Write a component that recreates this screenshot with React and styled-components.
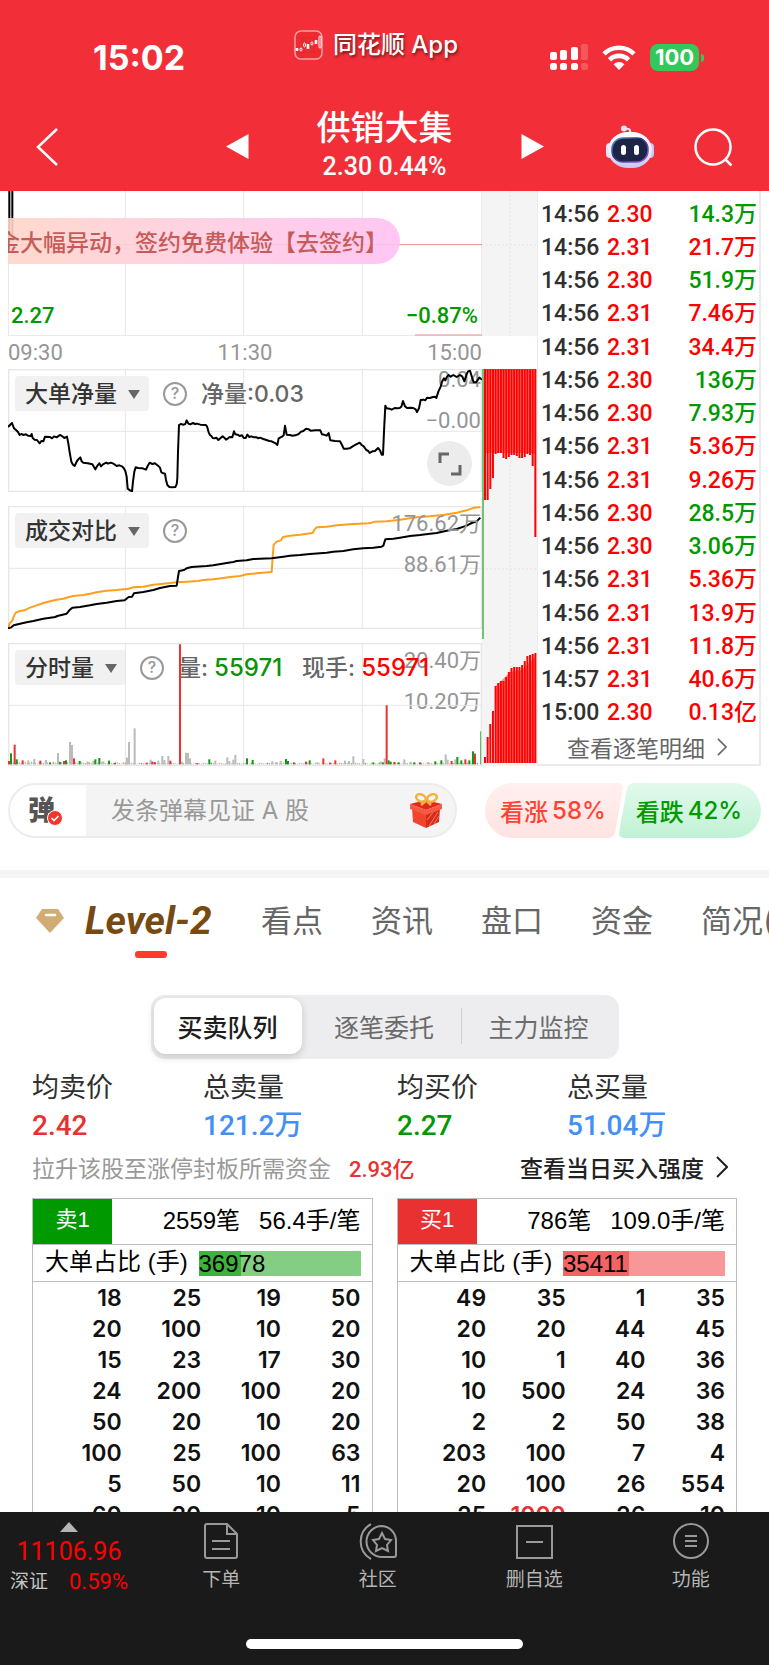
import React, { useState } from 'react';
import styled, { createGlobalStyle } from 'styled-components';

const GlobalStyle = createGlobalStyle`
  *, *::before, *::after {
    box-sizing: border-box;
  }
  body {
    margin: 0;
    background: #fff;
    color: #303030;
    font-family: "Inter", "Noto Sans CJK SC", sans-serif;
  }
  button, input, select {
    font: inherit;
    color: inherit;
    background: none;
    border: 0;
    padding: 0;
    margin: 0;
  }
  button, select {
    cursor: pointer;
  }
  a {
    color: inherit;
    text-decoration: none;
  }
  svg {
    display: block;
  }
`

const numberFont = '"Roboto", "Noto Sans CJK SC", sans-serif';
const tableFont = '"Liberation Sans", "Noto Sans CJK SC", sans-serif';

const colors = {
  red: '#ff0000',
  green: '#009900',
  softRed: '#ea3131',
  blue: '#448ff5',
};

const Screen = styled.div`
  display: flex;
  flex-direction: column;
  height: 100vh;
  overflow: hidden;
`

/* ---------- header ---------- */

const Header = styled.header`
  flex: none;
  height: 191px;
  background: #f22f38;
  color: #fff;
`

const StatusBar = styled.div`
  display: grid;
  grid-template-columns: 1fr auto 1fr;
  align-items: center;
  height: 100px;
  padding: 15px 65px 0 48px;
`

const Clock = styled.time`
  padding-left: 45px;
  font-size: 34px;
  font-weight: 700;
  line-height: 40px;
`

const AppTag = styled.div`
  display: flex;
  align-items: center;
  gap: 10px;
  margin-bottom: 26px;
  font-size: 24px;
  font-weight: 500;
  line-height: 30px;
  text-shadow: 1px 2px 3px rgba(0, 0, 0, 0.55);
`

const StatusIcons = styled.div`
  display: flex;
  justify-content: flex-end;
  align-items: center;
  gap: 14px;
`

const Battery = styled.div`
  display: flex;
  align-items: center;
  gap: 2px;
  &::after {
    content: '';
    width: 3px;
    height: 8px;
    border-radius: 0 3px 3px 0;
    background: #34c759;
  }
`

const BatteryLevel = styled.span`
  width: 49px;
  height: 27px;
  border-radius: 8px;
  background: #34c759;
  font-size: 22px;
  font-weight: 700;
  line-height: 27px;
  text-align: center;
`

const NavRow = styled.div`
  display: grid;
  grid-template-columns: 1fr auto 1fr;
  align-items: center;
  height: 91px;
  padding: 2px 35px 0;
`

const NavSide = styled.div`
  display: flex;
  align-items: center;
  justify-content: space-between;
`

const NavGroup = styled.div`
  display: flex;
  align-items: center;
  gap: 40px;
`

const TitleBlock = styled.div`
  width: 272px;
  text-align: center;
`

const StockName = styled.h1`
  margin: 0;
  font-size: 34px;
  font-weight: 500;
  line-height: 40px;
`

const StockPrice = styled.p`
  margin: 0;
  font-family: ${numberFont};
  font-size: 25px;
  font-weight: 500;
  line-height: 38px;
`

const IconButton = styled.button`
  display: flex;
  align-items: center;
  justify-content: center;
`

/* ---------- chart area ---------- */

const Main = styled.main`
  flex: 1;
  min-height: 0;
  overflow: hidden;
`

const Market = styled.section`
  display: grid;
  grid-template-columns: minmax(0, 1fr) 55px 224px;
  padding: 0 8px;
`

const Charts = styled.div`
  display: flex;
  flex-direction: column;
  gap: 14px;
`

const Panel = styled.div`
  display: grid;
  height: ${props => props.$height || 123}px;
  > * {
    grid-area: 1 / 1;
    min-width: 0;
  }
`

const Plot = styled.svg`
  width: 100%;
  height: 100%;
  * {
    vector-effect: non-scaling-stroke;
  }
`

const PriceOverlay = styled.div`
  display: flex;
  flex-direction: column;
  justify-content: space-between;
  padding: 27px 0 6px;
`

const Notice = styled.a`
  display: flex;
  justify-content: flex-end;
  align-items: center;
  width: 392px;
  height: 46px;
  padding-right: 12px;
  overflow: hidden;
  border-radius: 0 23px 23px 0;
  background: linear-gradient(90deg, rgba(255, 213, 200, 0.9), rgba(255, 205, 225, 0.9) 50%, rgba(255, 192, 242, 0.9));
  color: #c75b58;
  font-size: 23px;
  font-weight: 500;
  white-space: nowrap;
`

const PriceRange = styled.div`
  display: flex;
  justify-content: space-between;
  padding: 0 4px 0 3px;
  color: ${colors.green};
  font-family: ${numberFont};
  font-size: 22px;
  font-weight: 500;
  line-height: 29px;
`

const TimeAxis = styled.div`
  display: grid;
  grid-template-columns: 1fr auto 1fr;
  height: 33px;
  color: #959595;
  font-family: ${numberFont};
  font-size: 22px;
  line-height: 34px;
  > :last-child {
    text-align: right;
  }
`

const Toolbar = styled.div`
  display: flex;
  align-items: center;
  align-self: start;
  gap: 14px;
  padding: 7px 0 0 7px;
  color: #666;
  font-size: 23px;
  font-weight: 500;
  line-height: 34px;
  white-space: pre;
`

const SelectBox = styled.label`
  display: flex;
  align-items: center;
  height: 35px;
  border-radius: 4px;
  background: rgba(239, 239, 239, 0.9);
  color: #333;
  &::after {
    content: '';
    width: 12px;
    margin: 2px 9px 0 -20px;
    border: 6px solid transparent;
    border-top: 9px solid #666;
    border-bottom: 0;
    pointer-events: none;
  }
`

const IndicatorSelect = styled.select`
  appearance: none;
  padding: 0 31px 0 10px;
  outline: none;
`

const HelpButton = styled.button`
  width: 24px;
  height: 24px;
  border: 2px solid #999;
  border-radius: 50%;
  color: #999;
  font-size: 16px;
  line-height: 19px;
`

const Readings = styled.div`
  display: flex;
  gap: 20px;
`

const Value = styled.b`
  color: ${props => props.$color};
  font-size: 24px;
  font-weight: 500;
`

const Scale = styled.div`
  align-self: start;
  justify-self: end;
  margin-top: ${props => (props.$raised ? -10 : -3)}px;
  padding-right: 1px;
  color: #959595;
  font-family: ${numberFont};
  font-size: 22px;
  line-height: 41px;
  text-align: right;
`

const ScaleLine = styled.div`
  height: 41px;
`

const ExpandButton = styled.button`
  display: flex;
  align-items: center;
  justify-content: center;
  align-self: end;
  justify-self: end;
  width: 45px;
  height: 45px;
  margin: 0 10px 6px 0;
  border-radius: 50%;
  background: #ececec;
`

const DepthColumn = styled.svg`
  width: 55px;
  height: 575px;
`

/* ---------- trades ---------- */

const TradePanel = styled.div`
  display: flex;
  flex-direction: column;
  padding: 7px 2px 0 3px;
  border: solid #ebebeb;
  border-width: 0 2px 2px 1px;
  font-family: ${numberFont};
`

const TradeTable = styled.table`
  width: 100%;
  height: 532px;
  border-collapse: collapse;
  color: #303030;
  font-size: 23px;
  font-weight: 500;
  line-height: 30px;
  td {
    padding: 0;
  }
  td:first-child {
    width: 66px;
  }
`

const PriceCell = styled.td`
  color: ${colors.red};
`

const VolumeCell = styled.td`
  color: ${props => (props.$up ? colors.red : colors.green)};
  text-align: right;
`

const MoreLink = styled.a`
  display: flex;
  flex: 1;
  align-items: center;
  justify-content: center;
  gap: 12px;
  padding-right: 4px;
  color: #666;
  font-size: 23px;
`

/* ---------- danmu and vote ---------- */

const ActionRow = styled.div`
  display: flex;
  align-items: center;
  gap: 28px;
  height: 55px;
  margin: 17px 8px 32px;
`

const DanmuBar = styled.div`
  display: flex;
  flex: 1;
  align-items: center;
  height: 55px;
  padding-right: 12px;
  overflow: hidden;
  border: 2px solid #ececec;
  border-radius: 28px;
  background: #f4f4f4;
`

const DanmuToggle = styled.button`
  display: flex;
  align-items: center;
  align-self: stretch;
  width: 76px;
  padding-left: 18px;
  background: #fff;
  color: #555;
  font-size: 27px;
  font-weight: 900;
  line-height: 36px;
  svg {
    align-self: flex-end;
    flex: none;
    margin: 0 0 10px -8px;
  }
`

const DanmuInput = styled.input`
  flex: 1;
  min-width: 0;
  padding-left: 25px;
  outline: none;
  font-size: 24px;
  &::placeholder {
    color: #999;
    opacity: 1;
  }
`

const Vote = styled.div`
  display: flex;
  width: 276px;
  height: 55px;
  overflow: hidden;
  border-radius: 28px;
`

const VoteButton = styled.button`
  position: relative;
  display: flex;
  flex: 1;
  align-items: center;
  justify-content: center;
  gap: 4px;
  padding-right: ${props => (props.$up ? 0 : 4)}px;
  z-index: 0;
  color: ${props => (props.$up ? '#ff4236' : colors.green)};
  font-size: 24px;
  font-weight: 500;
  &::before {
    content: '';
    position: absolute;
    z-index: -1;
    inset: ${props => (props.$up ? '0 2px 0 -20px' : '0 -20px 0 2px')};
    border-radius: 6px;
    background: ${props => (props.$up
      ? 'linear-gradient(#fff0ef, #ffe3e1)'
      : 'linear-gradient(#e2f9ec, #c0f2d4)')};
    transform: skewX(-10deg);
  }
`

/* ---------- level-2 ---------- */

const Tabs = styled.nav`
  display: flex;
  gap: 48px;
  height: 125px;
  padding: 19px 0 0 36px;
  overflow: hidden;
  border-top: 8px solid #f4f4f4;
`

const Tab = styled.a`
  flex: none;
  color: #666;
  font-size: 31px;
  line-height: 48px;
`

const LevelTab = styled.a`
  display: grid;
  grid-template-columns: 49px 128px;
  grid-template-rows: 48px 7px;
  flex: none;
  align-items: center;
  row-gap: 6px;
  color: #774a12;
  font-family: ${numberFont};
  font-size: 39px;
  font-style: italic;
  font-weight: 700;
  line-height: 48px;
  white-space: nowrap;
  &::after {
    content: '';
    grid-column: 1 / -1;
    justify-self: center;
    width: 32px;
    height: 7px;
    margin-left: 52px;
    border-radius: 3px;
    background: #ff3a31;
  }
`

const Segments = styled.div`
  display: grid;
  grid-template-columns: repeat(3, 1fr);
  width: 468px;
  height: 64px;
  margin: 0 auto;
  padding: 3px;
  border-radius: 14px;
  background: #ededef;
`

const Segment = styled.button`
  margin: ${props => (props.$active ? '0 6px 2px 0' : '10px 0 12px')};
  border-right: ${props => (props.$divided ? '1px solid #cfcfd2' : '0')};
  border-radius: ${props => (props.$active ? '12px' : '0')};
  background: ${props => (props.$active ? '#fff' : 'none')};
  box-shadow: ${props => (props.$active ? '0 3px 8px rgba(0, 0, 0, 0.16)' : 'none')};
  color: ${props => (props.$active ? '#1d1d1d' : '#6b6b6b')};
  font-size: 25px;
  font-weight: ${props => (props.$active ? 500 : 400)};
`

const Detail = styled.section`
  padding: 10px 32px 0;
`

const Summary = styled.dl`
  display: grid;
  grid-template-columns: 171fr 194fr 170fr 170fr;
  margin: 0;
`

const SummaryItem = styled.div`
  dt {
    font-size: 27px;
    line-height: 38px;
  }
  dd {
    margin: 0;
    color: ${props => props.$color};
    font-family: ${numberFont};
    font-size: 28px;
    font-weight: 500;
    line-height: 37px;
  }
`

const HintRow = styled.div`
  display: flex;
  align-items: center;
  justify-content: space-between;
  height: 54px;
  padding: 0 9px 8px 0;
  font-size: 23px;
`

const Hint = styled.p`
  margin: 0;
  color: #999;
  b {
    margin-left: 18px;
    color: ${colors.softRed};
    font-family: ${numberFont};
    font-size: 22px;
    font-weight: 500;
  }
`

const StrengthLink = styled.a`
  display: flex;
  align-items: center;
  gap: 12px;
  color: #222;
  font-weight: 500;
`

const Queues = styled.div`
  display: grid;
  grid-template-columns: 1fr 1fr;
  gap: 24px;
`

const Queue = styled.div`
  border: 1px solid #bdbdbd;
  color: #000;
  font-family: ${tableFont};
  font-size: 24px;
`

const QueueHead = styled.div`
  display: flex;
  align-items: center;
  justify-content: flex-end;
  gap: 19px;
  height: 46px;
  padding-right: 11px;
  border-bottom: 1px solid #bdbdbd;
`

const QueueText = styled.span`
  padding-bottom: 7px;
`

const QueueName = styled.strong`
  align-self: stretch;
  width: 79px;
  margin-right: auto;
  background: ${props => props.$color};
  color: #fff;
  font-size: 22px;
  font-weight: 400;
  line-height: 42px;
  text-align: center;
`

const RatioRow = styled.div`
  display: flex;
  align-items: center;
  justify-content: space-between;
  height: 37px;
  padding: 0 11px 0 12px;
  border-bottom: 1px solid #bdbdbd;
`

const RatioBar = styled.div`
  width: 162px;
  height: 25px;
  background: linear-gradient(90deg, ${props => props.$dark} ${props => props.$share}%, ${props => props.$light} 0);
  line-height: 25px;
`

const OrderTable = styled.table`
  width: 100%;
  padding: 1px 11px 0 9px;
  border-spacing: 0;
  table-layout: fixed;
  font-family: "Inter", sans-serif;
  font-size: 23px;
  font-weight: 600;
  line-height: 31px;
  text-align: right;
  td {
    padding: 0;
  }
`

const OrderCell = styled.td`
  color: ${props => (props.$large ? colors.softRed : '#111')};
`

/* ---------- bottom bar ---------- */

const BottomBar = styled.footer`
  flex: none;
  height: 153px;
  background: #1a1a1a;
  color: #b5b5b5;
`

const BottomItems = styled.nav`
  display: grid;
  grid-template-columns: 143px repeat(4, 1fr);
  height: 127px;
`

const IndexQuote = styled.button`
  display: flex;
  flex-direction: column;
  align-items: center;
  padding: 10px 5px 0 0;
  color: ${colors.red};
  font-family: ${numberFont};
  font-size: 25px;
  line-height: 30px;
  &::before {
    content: '';
    margin-bottom: 5px;
    border: 9px solid transparent;
    border-top: 0;
    border-bottom: 10px solid #b5b5b5;
  }
`

const IndexChange = styled.span`
  display: flex;
  gap: 21px;
  font-size: 22px;
  small {
    color: #c5c5c5;
    font-size: 19px;
  }
`

const BottomItem = styled.button`
  display: flex;
  flex-direction: column;
  align-items: center;
  gap: 6px;
  padding-top: 10px;
  font-size: 19px;
  line-height: 28px;
`

const HomeIndicator = styled.div`
  width: 36%;
  height: 10px;
  margin: 0 auto;
  border-radius: 5px;
  background: #fff;
`

/* ---------- data ---------- */

const trades = [
  ['14:56', '2.30', '14.3万', false],
  ['14:56', '2.31', '21.7万', true],
  ['14:56', '2.30', '51.9万', false],
  ['14:56', '2.31', '7.46万', true],
  ['14:56', '2.31', '34.4万', true],
  ['14:56', '2.30', '136万', false],
  ['14:56', '2.30', '7.93万', false],
  ['14:56', '2.31', '5.36万', true],
  ['14:56', '2.31', '9.26万', true],
  ['14:56', '2.30', '28.5万', false],
  ['14:56', '2.30', '3.06万', false],
  ['14:56', '2.31', '5.36万', true],
  ['14:56', '2.31', '13.9万', true],
  ['14:56', '2.31', '11.8万', true],
  ['14:57', '2.31', '40.6万', true],
  ['15:00', '2.30', '0.13亿', true],
];

const summary = [
  ['均卖价', '2.42', colors.softRed],
  ['总卖量', '121.2万', colors.blue],
  ['均买价', '2.27', colors.green],
  ['总买量', '51.04万', colors.blue],
];

const queues = [
  {
    name: '卖1', count: '2559笔', average: '56.4手/笔', total: '36978', share: 26,
    color: '#009900', dark: '#3db33d', light: '#83ce83',
    rows: [
      [18, 25, 19, 50], [20, 100, 10, 20], [15, 23, 17, 30], [24, 200, 100, 20],
      [50, 20, 10, 20], [100, 25, 100, 63], [5, 50, 10, 11], [60, 20, 10, 5],
    ],
  },
  {
    name: '买1', count: '786笔', average: '109.0手/笔', total: '35411', share: 41,
    color: '#ea3131', dark: '#f26464', light: '#f79797',
    rows: [
      [49, 35, 1, 35], [20, 20, 44, 45], [10, 1, 40, 36], [10, 500, 24, 36],
      [2, 2, 50, 38], [203, 100, 7, 4], [20, 100, 26, 554], [25, 1000, 26, 10],
    ],
  },
];

const netLine = '24,186 36,174 42,190 48,195 54,201 59,210 64,207 71,210 78,208 84,212 92,213 95,207 98,219 104,224 111,225 119,235 124,228 130,229 135,215 150,216 156,220 162,214 170,217 177,212 181,210 187,214 193,219 201,215 205,235 209,262 214,290 219,299 224,303 231,288 237,281 241,277 245,289 250,293 263,295 277,298 286,313 293,301 298,295 303,304 309,298 313,296 319,293 324,296 332,293 340,296 350,303 358,301 366,304 371,309 376,318 380,335 383,371 390,376 396,379 399,350 403,320 407,307 414,309 428,310 438,314 443,303 449,293 457,297 465,295 474,302 480,308 484,322 490,325 495,326 498,345 502,360 508,366 516,367 526,366 530,358 532,340 534,260 537,180 542,177 551,179 556,177 560,166 565,176 571,178 579,174 585,177 591,176 601,179 617,180 621,184 626,202 630,210 634,213 638,219 644,220 649,218 655,225 661,220 668,214 673,218 678,224 684,220 689,216 697,217 702,199 706,208 713,209 719,213 726,211 731,219 737,219 742,209 748,216 754,214 762,217 770,217 775,220 780,218 790,222 799,225 808,228 815,229 821,232 827,235 832,240 836,220 846,215 851,211 855,182 860,209 870,210 877,212 886,211 896,207 903,200 910,198 918,191 926,193 932,197 946,196 961,196 966,208 972,209 980,212 986,204 991,226 1005,228 1020,229 1026,240 1031,251 1040,251 1049,250 1058,244 1067,239 1079,233 1085,240 1091,244 1099,255 1105,258 1109,264 1117,259 1125,258 1134,249 1140,256 1145,269 1149,269 1152,200 1156,122 1160,130 1168,131 1175,134 1184,129 1191,130 1199,129 1204,125 1209,108 1215,124 1221,129 1231,128 1240,129 1247,133 1251,141 1257,130 1262,105 1270,104 1276,106 1281,98 1290,99 1299,96 1305,95 1309,99 1315,80 1322,65 1326,50 1332,40 1336,46 1341,35 1346,30 1352,35 1360,30 1370,36 1380,30 1387,35 1393,49 1399,30 1404,19 1410,17 1416,37 1421,52 1428,52 1438,38 1446,44';
const buyLine = '24,384 29,369 37,361 41,349 47,337 60,332 73,330 90,322 110,315 130,308 150,303 170,298 190,295 207,290 220,287 250,284 270,280 290,276 320,271 350,269 386,265 400,261 430,259 460,253 490,250 530,246 560,244 595,242 610,239 640,237 670,233 690,230 720,227 740,222 770,219 815,215 818,170 821,133 830,124 843,120 849,110 870,106 900,103 938,98 944,87 950,81 980,79 1010,75 1050,72 1106,69 1115,67 1125,64 1160,63 1200,58 1250,51 1290,48 1330,44 1370,37 1400,30 1422,22 1441,21';
const sellLine = '24,384 34,381 41,375 60,370 80,366 100,362 130,355 166,350 172,347 200,340 208,330 217,322 240,320 270,315 290,311 320,307 350,302 374,300 386,290 396,289 402,279 430,275 460,269 480,263 510,257 530,256 534,230 537,212 552,209 560,204 575,200 620,197 640,195 680,188 700,185 710,182 740,180 760,176 815,174 850,169 870,166 900,164 930,161 980,157 1000,154 1030,152 1060,147 1090,144 1120,142 1145,139 1150,136 1156,117 1180,115 1200,112 1230,107 1260,104 1290,100 1310,98 1340,91 1370,86 1400,76 1415,68 1430,63 1441,52';

// [x, height, color], in plot units above the baseline
const volumeBars = [
  [27, 10, 'r'], [33, 33, 'g'], [44, 59, 'r'], [50, 15, 'g'], [68, 12, 'r'], [85, 12], [103, 16], [121, 11, 'r'],
  [138, 13], [150, 6, 'g'], [174, 34], [180, 7, 'g'], [192, 10, 'r'], [198, 12, 'g'], [210, 67], [216, 58],
  [222, 18, 'r'], [239, 10, 'g'], [263, 8], [280, 11], [286, 15, 'g'], [298, 19, 'g'], [310, 9], [327, 11, 'g'],
  [345, 4, 'r'], [381, 20], [387, 67], [404, 108], [440, 5, 'r'], [452, 14], [457, 8, 'r'], [464, 7, 'r'], [475, 11],
  [487, 25], [493, 13], [505, 25], [511, 11, 'r'], [546, 8], [558, 35], [564, 34], [570, 18], [592, 4, 'r'],
  [628, 15, 'g'], [646, 11], [682, 21], [688, 10], [700, 14], [706, 28], [741, 18, 'g'], [758, 13, 'g'],
  [817, 9], [830, 7], [842, 10], [858, 16, 'g'], [864, 10, 'g'], [882, 6, 'r'], [918, 8, 'r'], [929, 12, 'g'],
  [953, 6], [970, 18, 'r'], [990, 5, 'r'], [1006, 12, 'r'], [1035, 11], [1047, 10], [1060, 24], [1090, 16],
  [1120, 6, 'g'], [1143, 8], [1149, 6, 'g'], [1154, 18], [1166, 12, 'g'], [1172, 8, 'g'], [1183, 7, 'r'], [1196, 6, 'g'],
  [1213, 15], [1231, 7], [1243, 6, 'g'], [1260, 6, 'r'], [1284, 7], [1306, 9, 'g'], [1324, 12, 'g'], [1337, 30],
  [1343, 14], [1355, 10, 'r'], [1366, 15], [1372, 22, 'g'], [1384, 12, 'g'], [1396, 15, 'r'], [1408, 12, 'g'],
  [1419, 39, 'g'], [1425, 32, 'r'],
];
const barColors = { r: '#f03030', g: '#119911' };

const askDepth = [131, 131, 120, 109, 85, 84, 84, 89, 90, 88, 86, 86, 87, 89, 89, 88, 85, 86, 97, 168];
const bidDepth = [6, 26, 39, 52, 77, 80, 82, 82, 86, 91, 95, 96, 96, 96, 98, 102, 107, 108, 109, 110];

/* ---------- icons ---------- */

const Chevron = ({ width, height, stroke = 2 }) => (
  <svg width={width} height={height} viewBox="0 0 12 22" fill="none" stroke="currentColor" strokeWidth={stroke}>
    <path d="M1 1l10 10L1 21" />
  </svg>
);

const AppIcon = () => (
  <svg width="29" height="30" viewBox="0 0 29 30" fill="none" stroke="#fff">
    <rect x="1" y="1" width="27" height="28" rx="6" fill="#ee2b30" stroke="#f7a3a5" strokeWidth="1.5" />
    <path d="M2 8h25M2 22h25M8 2v26M20 2v26" stroke="#e02329" strokeWidth=".6" />
    <path d="M3 18v3M14 14v5M22 10v4" strokeWidth="2.6" />
    <ellipse cx="7" cy="19.500" rx="1" ry="1.600" />
    <ellipse cx="10.500" cy="15" rx="1" ry="2" />
    <ellipse cx="18" cy="13.500" rx="1" ry="1.600" />
    <rect x="25" y="6" width="2" height="12" rx="1" />
  </svg>
);

const SignalIcon = () => (
  <svg width="38" height="27" viewBox="0 0 38 27" fill="#fff">
    <rect x="0" y="8" width="7" height="8" rx="2" />
    <rect x="10" y="6" width="7" height="10" rx="2" />
    <rect x="21" y="3" width="7" height="13" rx="2" />
    <rect x="31" y="0" width="7" height="16" rx="2" opacity=".2" />
    <rect x="0" y="19" width="7" height="7" rx="2.500" />
    <rect x="10" y="19" width="7" height="7" rx="2.500" />
    <rect x="21" y="19" width="7" height="7" rx="2.500" />
    <rect x="31" y="19" width="7" height="7" rx="2.500" opacity=".2" />
  </svg>
);

const WifiIcon = () => (
  <svg width="34" height="25" viewBox="0 0 34 25" fill="none" stroke="#fff" strokeWidth="4.600">
    <path d="M2 8.800a21.500 21.500 0 0 1 30 0" />
    <path d="M7.500 14.800a13.500 13.500 0 0 1 19 0" />
    <path d="M17 25l-5.500-5.700a8 8 0 0 1 11 0z" fill="#fff" stroke="none" />
  </svg>
);

const Triangle = ({ left }) => (
  <svg width="23" height="25" viewBox="0 0 23 25" fill="#fff">
    <path d={left ? 'M22.500 0v25L0 12.500z' : 'M.5 0v25L23 12.500z'} />
  </svg>
);

const RobotIcon = () => (
  <svg width="48" height="44" viewBox="0 0 48 44">
    <defs>
      <linearGradient id="shell" x1="0" y1="0" x2="0" y2="1">
        <stop offset="0" stopColor="#fff" />
        <stop offset="0.6" stopColor="#e9e9fb" />
        <stop offset="1" stopColor="#c3c5f2" />
      </linearGradient>
      <linearGradient id="visor" x1="0" y1="0" x2="1" y2="1">
        <stop offset="0" stopColor="#5ba4ee" />
        <stop offset="0.4" stopColor="#3a2f78" />
        <stop offset="1" stopColor="#a15bf0" />
      </linearGradient>
    </defs>
    <path d="M24 8c1-4-2-5-6-4" fill="none" stroke="#ececfd" strokeWidth="2" />
    <circle cx="18" cy="3.500" r="3" fill="#e4e4fb" />
    <rect x="0" y="18" width="8" height="15" rx="4" fill="#e2e2fa" />
    <rect x="40" y="18" width="8" height="15" rx="4" fill="#c5c8f4" />
    <rect x="2" y="7" width="44" height="36" rx="20" ry="18" fill="url(#shell)" />
    <rect x="6" y="13" width="36" height="24" rx="11" fill="#1d2547" stroke="url(#visor)" strokeWidth="1.500" />
    <rect x="15" y="20" width="5" height="10" rx="2.500" fill="#fff" />
    <rect x="28" y="20" width="5" height="10" rx="2.500" fill="#fff" />
  </svg>
);

const SearchIcon = () => (
  <svg width="40" height="40" viewBox="0 0 40 40" fill="none" stroke="#fff" strokeWidth="2.500">
    <circle cx="19" cy="20" r="17.500" />
    <path d="M31 32l6.500 6.500" />
  </svg>
);

const CheckBadge = () => (
  <svg width="16" height="16" viewBox="0 0 16 16" fill="none">
    <circle cx="8" cy="8" r="7.500" fill="#f5372b" stroke="#fff" />
    <path d="M4.500 8l2.500 2.500 4.500-4.500" stroke="#fff" strokeWidth="1.600" />
  </svg>
);

const GiftIcon = () => (
  <svg width="34" height="36" viewBox="0 0 34 36">
    <path d="M3 15l14 5v15L4 29z" fill="#f0452e" />
    <path d="M31 15l-14 5v15l13-6z" fill="#d92a1e" />
    <path d="M20 33l9-14M25 31l5-8M18 27l7-9" stroke="#f47a55" />
    <path d="M1 11l16-4 16 4-16 6z" fill="#e2281e" />
    <path d="M1 11l16 6v5L1 16zM33 11l-16 6v5l16-6z" fill="#f65a40" />
    <g fill="none" stroke="#f0b43c" strokeWidth="2.500">
      <ellipse cx="12" cy="5" rx="5" ry="3.500" transform="rotate(25 12 5)" />
      <ellipse cx="23" cy="5" rx="5" ry="3.500" transform="rotate(-25 23 5)" />
      <path d="M17 8l-5 4M18 8l4 4" />
    </g>
  </svg>
);

const DiamondIcon = () => (
  <svg width="28" height="24" viewBox="0 0 28 24">
    <path d="M6 0h16l6 9-14 15L0 9z" fill="#d2ac75" />
    <path d="M10 6h9" stroke="#fff" strokeWidth="2.500" strokeLinecap="round" />
  </svg>
);

const bottomIcons = {
  下单: <path d="M3 1h20l10 10v22a2 2 0 0 1-2 2H3a2 2 0 0 1-2-2V3a2 2 0 0 1 2-2zM23 1v10h10M8 18h18M8 26h18" />,
  社区: (
    <>
      <path d="M22 3a15 15 0 1 0 0 31h12a2 2 0 0 0 2-2V18A15 15 0 0 0 22 3z" />
      <path d="M11 1a20 20 0 0 0 0 35M22 10l3 6 6 1-4 5 1 6-6-3-6 3 1-6-4-5 6-1z" />
    </>
  ),
  删自选: <path d="M1 3h35v32H1zM10 19h17" />,
  功能: (
    <>
      <circle cx="18" cy="18" r="17" />
      <path d="M12 13h12M12 18h12M12 23h12" />
    </>
  ),
};

/* ---------- components ---------- */

const Grid = ({ top = 12, height = 369, mid = 187 }) => (
  <g fill="none" stroke="#e6e6e6">
    <path d={`M376 ${top}v${height}M731 ${top}v${height}M1087 ${top}v${height}M24 ${top + mid}h1422`} />
    <path d={`M25 ${top + 1}h1420v${height - 2}h-1420z`} strokeWidth="2" />
  </g>
);

const ChartPlot = ({ top, label, children }) => (
  <Plot viewBox={`24 ${top} 1422 369`} preserveAspectRatio="none" role="img" aria-label={label}>
    <Grid top={top} />
    {children}
  </Plot>
);

const Indicator = ({ name, children }) => (
  <Toolbar>
    <SelectBox>
      <IndicatorSelect aria-label={name} defaultValue={name}>
        <option>{name}</option>
      </IndicatorSelect>
    </SelectBox>
    <HelpButton aria-label={`${name}说明`}>?</HelpButton>
    {children}
  </Toolbar>
);

const ScaleLabels = ({ values, raised }) => (
  <Scale $raised={raised}>
    {values.map(value => <ScaleLine key={value}>{value}</ScaleLine>)}
  </Scale>
);

const PriceChart = () => (
  <div>
    <Panel $height={145}>
      <Plot viewBox="24 3 1422 435" preserveAspectRatio="none" role="img" aria-label="分时走势">
        <path d="M376 3v435M731 3v435M1087 3v435M24 437h1422M25 3v435M1445 3v435" stroke="#e6e6e6" strokeWidth="1" />
        <path d="M28 3v150M37 3v150" fill="none" stroke="#000" strokeWidth="2" />
        <path d="M24 164h1422M1245 435h201" stroke="#f08a90" strokeWidth="1" />
      </Plot>
      <PriceOverlay>
        <Notice href="#sign">金大幅异动，签约免费体验【去签约】</Notice>
        <PriceRange>
          <span>2.27</span>
          <span>−0.87%</span>
        </PriceRange>
      </PriceOverlay>
    </Panel>
    <TimeAxis>
      <span>09:30</span>
      <span>11:30</span>
      <span>15:00</span>
    </TimeAxis>
  </div>
);

const VolumeChart = () => (
  <ChartPlot top={21} label="分时量">
    {Array.from({ length: 235 }, (_, i) => (
      <rect
        key={i}
        x={26 + i * 6}
        y={385 - 2 - (i < 60 ? (i * 5) % 7 : (i * 3) % 4)}
        width="4"
        height={2 + (i < 60 ? (i * 5) % 7 : (i * 3) % 4)}
        fill={i % 9 === 4 ? '#ee8080' : i % 7 === 3 ? '#55b055' : '#bbb'}
      />
    ))}
    {volumeBars.map(([x, height, color]) => (
      <rect key={x} x={x - 3} y={385 - height} width="6" height={height} fill={barColors[color] || '#bbb'} />
    ))}
    <path d="M540 25v360M1160 208v177" stroke="#f03030" strokeWidth="2" />
    <path d="M1442 286v99" stroke="#4db04d" strokeWidth="1" />
  </ChartPlot>
);

const Depth = () => (
  <DepthColumn viewBox="0 0 55 575" preserveAspectRatio="none" role="img" aria-label="买卖盘深度">
    <path d="M0 0h55v145H0zM0 178h55v397H0z" fill="#f4f4f4" />
    <path d="M28 0v145M28 178v397M0 54h55M0 378h55" stroke="#e4e4e4" strokeDasharray="2 2" />
    <path d="M2 178h52v84H2zM14 495l14-14 12-2 14-14v107H14z" fill="#ff8a8a" />
    {askDepth.map((height, i) => (
      <rect key={i} x={2 + i * 2.65} y="178" width="2" height={height} fill="#ff0000" />
    ))}
    {bidDepth.map((height, i) => (
      <rect key={i} x={2 + i * 2.65} y={572 - height} width="2" height={height} fill="#ff0000" />
    ))}
    <path d="M1 178v270" stroke="#4db04d" strokeWidth="1.5" />
  </DepthColumn>
);

const Trades = () => (
  <TradePanel>
    <TradeTable aria-label="逐笔成交">
      <tbody>
        {trades.map(([time, price, volume, up], i) => (
          <tr key={i}>
            <td>{time}</td>
            <PriceCell>{price}</PriceCell>
            <VolumeCell $up={up}>{volume}</VolumeCell>
          </tr>
        ))}
      </tbody>
    </TradeTable>
    <MoreLink href="#trades">
      查看逐笔明细
      <Chevron width={10} height={18} />
    </MoreLink>
  </TradePanel>
);

const OrderQueue = ({ queue }) => (
  <Queue>
    <QueueHead>
      <QueueName $color={queue.color}>{queue.name}</QueueName>
      <QueueText>{queue.count}</QueueText>
      <QueueText>{queue.average}</QueueText>
    </QueueHead>
    <RatioRow>
      <QueueText>大单占比 (手)</QueueText>
      <RatioBar $dark={queue.dark} $light={queue.light} $share={queue.share}>{queue.total}</RatioBar>
    </RatioRow>
    <OrderTable aria-label={`${queue.name}队列`}>
      <tbody>
        {queue.rows.map((row, i) => (
          <tr key={i}>
            {row.map((amount, j) => (
              <OrderCell key={j} $large={amount >= 1000}>{amount}</OrderCell>
            ))}
          </tr>
        ))}
      </tbody>
    </OrderTable>
  </Queue>
);

const segmentNames = ['买卖队列', '逐笔委托', '主力监控'];

const App = () => {
  const [segment, setSegment] = useState(0);

  return (
    <Screen>
      <GlobalStyle />
      <Header>
        <StatusBar>
          <Clock>15:02</Clock>
          <AppTag>
            <AppIcon />
            同花顺 App
          </AppTag>
          <StatusIcons>
            <SignalIcon />
            <WifiIcon />
            <Battery>
              <BatteryLevel>100</BatteryLevel>
            </Battery>
          </StatusIcons>
        </StatusBar>
        <NavRow>
          <NavSide>
            <IconButton aria-label="返回">
              <svg width="24" height="40" viewBox="0 0 24 40" fill="none" stroke="#fff" strokeWidth="2.500">
                <path d="M22 2L3 20l19 18" />
              </svg>
            </IconButton>
            <IconButton aria-label="上一只">
              <Triangle left />
            </IconButton>
          </NavSide>
          <TitleBlock>
            <StockName>供销大集</StockName>
            <StockPrice>2.30 0.44%</StockPrice>
          </TitleBlock>
          <NavSide>
            <IconButton aria-label="下一只">
              <Triangle />
            </IconButton>
            <NavGroup>
              <IconButton aria-label="智能助手">
                <RobotIcon />
              </IconButton>
              <IconButton aria-label="搜索">
                <SearchIcon />
              </IconButton>
            </NavGroup>
          </NavSide>
        </NavRow>
      </Header>

      <Main>
        <Market>
          <Charts>
            <div>
              <PriceChart />
              <Panel>
                <ChartPlot top={12} label="大单净量" />
                <ScaleLabels values={['0.04', '−0.00']} raised />
                <Plot viewBox="24 12 1422 369" preserveAspectRatio="none" aria-hidden="true">
                  <polyline points={netLine} fill="none" stroke="#000" strokeWidth="2" strokeLinejoin="round" />
                </Plot>
                <Indicator name="大单净量">净量:0.03</Indicator>
                <ExpandButton aria-label="全屏">
                  <svg width="24" height="24" viewBox="0 0 24 24" fill="none" stroke="#666" strokeWidth="3">
                    <path d="M2 11V2h9M22 13v9h-9" />
                  </svg>
                </ExpandButton>
              </Panel>
            </div>
            <Panel>
              <ChartPlot top={17} label="成交对比">
                <polyline points={buyLine} fill="none" stroke="#ff9f1c" strokeWidth="2" strokeLinejoin="round" />
                <polyline points={sellLine} fill="none" stroke="#000" strokeWidth="2" strokeLinejoin="round" />
              </ChartPlot>
              <Indicator name="成交对比" />
              <ScaleLabels values={['176.62万', '88.61万']} />
            </Panel>
            <Panel>
              <ScaleLabels values={['20.40万', '10.20万']} />
              <Indicator name="分时量">
                <Readings>
                  <span>量: <Value $color="#099309">55971</Value></span>
                  <span>现手: <Value $color={colors.red}>55971</Value></span>
                </Readings>
              </Indicator>
              <VolumeChart />
            </Panel>
          </Charts>
          <Depth />
          <Trades />
        </Market>

        <ActionRow>
          <DanmuBar>
            <DanmuToggle aria-label="弹幕开关">
              弹
              <CheckBadge />
            </DanmuToggle>
            <DanmuInput aria-label="发弹幕" placeholder="发条弹幕见证 A 股" />
            <IconButton aria-label="礼物">
              <GiftIcon />
            </IconButton>
          </DanmuBar>
          <Vote>
            <VoteButton $up>
              <span>看涨</span>
              <span>58%</span>
            </VoteButton>
            <VoteButton>
              <span>看跌</span>
              <span>42%</span>
            </VoteButton>
          </Vote>
        </ActionRow>

        <Tabs>
          <LevelTab href="#level2">
            <DiamondIcon />
            Level-2
          </LevelTab>
          <Tab href="#view">看点</Tab>
          <Tab href="#news">资讯</Tab>
          <Tab href="#quote">盘口</Tab>
          <Tab href="#funds">资金</Tab>
          <Tab href="#profile">简况(F10)</Tab>
        </Tabs>

        <Segments>
          {segmentNames.map((name, i) => (
            <Segment key={name} $active={segment === i} $divided={i === 1} onClick={() => setSegment(i)}>
              {name}
            </Segment>
          ))}
        </Segments>

        <Detail>
          <Summary>
            {summary.map(([name, value, color]) => (
              <SummaryItem key={name} $color={color}>
                <dt>{name}</dt>
                <dd>{value}</dd>
              </SummaryItem>
            ))}
          </Summary>
          <HintRow>
            <Hint>
              拉升该股至涨停封板所需资金<b>2.93亿</b>
            </Hint>
            <StrengthLink href="#strength">
              查看当日买入强度
              <Chevron width={12} height={22} />
            </StrengthLink>
          </HintRow>
          <Queues>
            {queues.map(queue => <OrderQueue key={queue.name} queue={queue} />)}
          </Queues>
        </Detail>
      </Main>

      <BottomBar>
        <BottomItems>
          <IndexQuote>
            11106.96
            <IndexChange>
              <small>深证</small>
              0.59%
            </IndexChange>
          </IndexQuote>
          {Object.entries(bottomIcons).map(([name, icon]) => (
            <BottomItem key={name}>
              <svg width="38" height="38" viewBox={name === '下单' ? '-2 -1 38 38' : '-1 -1 38 38'} fill="none" stroke="#999" strokeWidth="2">
                {icon}
              </svg>
              {name}
            </BottomItem>
          ))}
        </BottomItems>
        <HomeIndicator />
      </BottomBar>
    </Screen>
  );
};

export default App;
